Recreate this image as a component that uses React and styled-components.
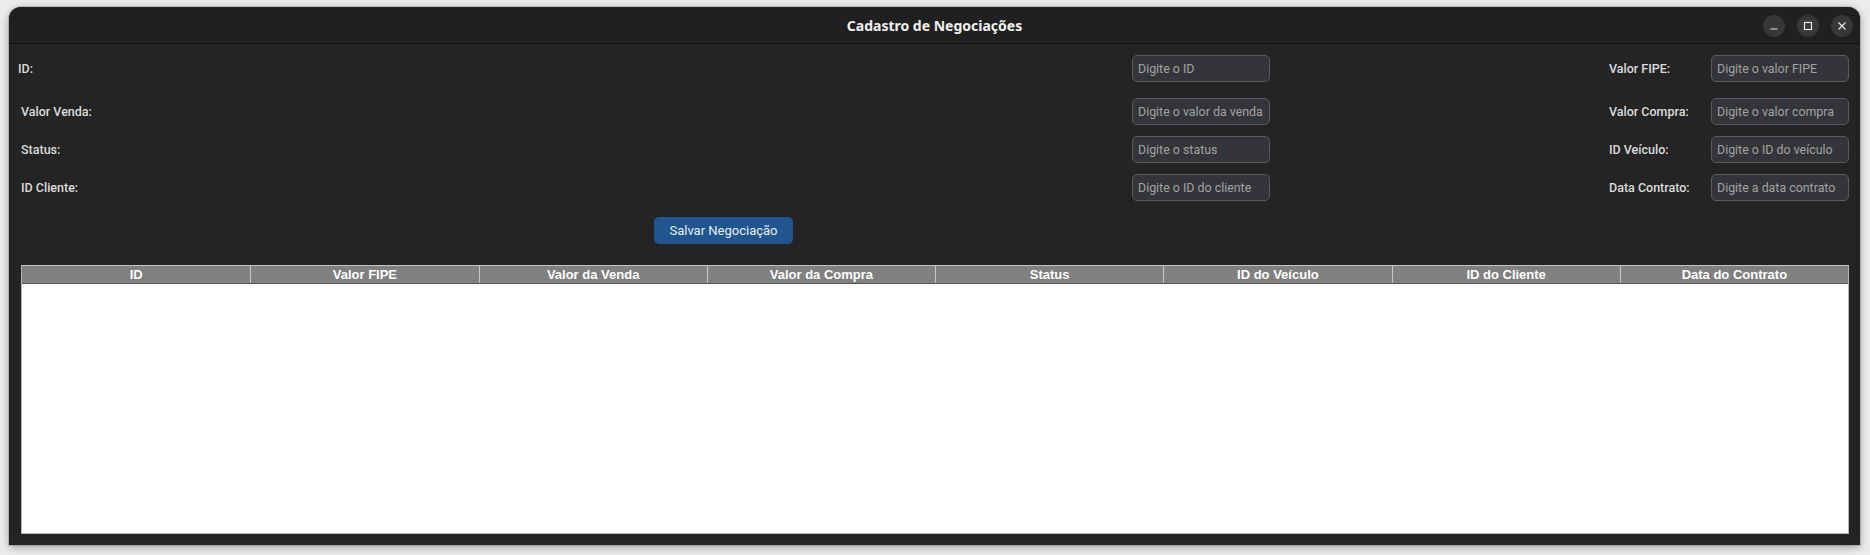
import React from 'react';
import styled, { createGlobalStyle } from 'styled-components';

const GlobalStyle = createGlobalStyle`
  html, body {
    margin: 0;
    padding: 0;
    background: #ececec;
    overflow: hidden;
  }
  body {
    font-family: Roboto, "Liberation Sans", sans-serif;
  }
`;

const fields = [
  { left: 'ID:', leftPh: 'Digite o ID', right: 'Valor FIPE:', rightPh: 'Digite o valor FIPE', space: 11, shift: true },
  { left: 'Valor Venda:', leftPh: 'Digite o valor da venda', right: 'Valor Compra:', rightPh: 'Digite o valor compra', space: 16 },
  { left: 'Status:', leftPh: 'Digite o status', right: 'ID Veículo:', rightPh: 'Digite o ID do veículo', space: 11 },
  { left: 'ID Cliente:', leftPh: 'Digite o ID do cliente', right: 'Data Contrato:', rightPh: 'Digite a data contrato', space: 11 },
];

const columns = [
  'ID',
  'Valor FIPE',
  'Valor da Venda',
  'Valor da Compra',
  'Status',
  'ID do Veículo',
  'ID do Cliente',
  'Data do Contrato',
];

function App() {
  return (
    <Screen>
      <GlobalStyle />
      <Window>
        <TitleBar>
          <span />
          <Title>Cadastro de Negociações</Title>
          <Controls>
            <CtrlButton aria-label='minimizar'>
              <svg width='10' height='10' viewBox='0 0 10 10'>
                <path d='M1.5 8h7' stroke='#e8e8e8' strokeWidth='1.2' />
              </svg>
            </CtrlButton>
            <CtrlButton aria-label='maximizar'>
              <svg width='10' height='10' viewBox='0 0 10 10'>
                <rect x='1.5' y='1.5' width='7' height='7' fill='none' stroke='#e8e8e8' strokeWidth='1.2' />
              </svg>
            </CtrlButton>
            <CtrlButton aria-label='fechar'>
              <svg width='10' height='10' viewBox='0 0 10 10'>
                <path d='M1.5 1.5l7 7M8.5 1.5l-7 7' stroke='#e8e8e8' strokeWidth='1.2' />
              </svg>
            </CtrlButton>
          </Controls>
        </TitleBar>
        <Body>
          {fields.map((f) => (
            <FormRow key={f.left} $space={f.space}>
              <Label $shift={f.shift}>{f.left}</Label>
              <Input type='text' placeholder={f.leftPh} />
              <span />
              <Label>{f.right}</Label>
              <Input type='text' placeholder={f.rightPh} />
            </FormRow>
          ))}
          <ButtonRow>
            <SaveButton>Salvar Negociação</SaveButton>
          </ButtonRow>
          <TableFrame>
            <HeaderRow>
              {columns.map((c) => (
                <HeaderCell key={c}>{c}</HeaderCell>
              ))}
            </HeaderRow>
            <TableBody />
          </TableFrame>
        </Body>
      </Window>
    </Screen>
  );
}

const Screen = styled.div`
  width: 1870px;
  height: 555px;
  box-sizing: border-box;
  padding: 7px 10px 10px 9px;
  display: flex;
`;

const Window = styled.div`
  flex: 1;
  display: flex;
  flex-direction: column;
  background: #242424;
  border-radius: 12px 12px 0 0;
  box-shadow: 0 2px 9px rgba(0, 0, 0, 0.35), 0 0 0 1px rgba(0, 0, 0, 0.12);
  overflow: hidden;
`;

const TitleBar = styled.div`
  height: 36px;
  flex: none;
  display: grid;
  grid-template-columns: 1fr auto 1fr;
  align-items: center;
  background: #202020;
  border-bottom: 1px solid #121212;
`;

const Title = styled.div`
  font-family: "Noto Sans", "Open Sans", sans-serif;
  font-weight: 700;
  font-size: 14px;
  color: #f2f2f2;
`;

const Controls = styled.div`
  justify-self: end;
  display: flex;
  gap: 12px;
  padding-right: 7px;
  padding-top: 1px;
`;

const CtrlButton = styled.button`
  width: 22px;
  height: 22px;
  border-radius: 50%;
  border: none;
  padding: 0;
  background: #373737;
  display: flex;
  align-items: center;
  justify-content: center;
`;

const Body = styled.div`
  flex: 1;
  display: flex;
  flex-direction: column;
  padding: 0 11px 11px 12px;
`;

const FormRow = styled.div`
  display: grid;
  grid-template-columns: 1fr 138px 339px 102px 138px;
  align-items: center;
  height: 27px;
  margin-top: ${(p) => p.$space}px;
`;

const Label = styled.label`
  font-family: Roboto, "Liberation Sans", sans-serif;
  font-weight: 500;
  font-size: 12.5px;
  color: #dcdcdc;
  margin-left: ${(p) => (p.$shift ? '-3px' : '0')};
`;

const Input = styled.input`
  box-sizing: border-box;
  width: 138px;
  height: 27px;
  padding: 0 0 0 5px;
  background: #333538;
  border: 1px solid #575a5e;
  border-radius: 5px;
  color: #e0e0e0;
  font-family: Roboto, "Liberation Sans", sans-serif;
  font-size: 12.4px;
  outline: none;

  &::placeholder {
    color: #a2a2a2;
  }
`;

const ButtonRow = styled.div`
  display: flex;
  margin-top: 16px;
  padding-left: 633px;
`;

const SaveButton = styled.button`
  width: 139px;
  height: 27px;
  border: none;
  border-radius: 5px;
  background: #20558f;
  color: #e6edf5;
  font-family: Roboto, "Liberation Sans", sans-serif;
  font-size: 13px;
  padding: 0;
`;

const TableFrame = styled.div`
  margin-top: 21px;
  flex: 1;
  display: flex;
  flex-direction: column;
  background: #ffffff;
  border: 1px solid #b8b8b8;
  border-top-color: #c4c4c4;
`;

const HeaderRow = styled.div`
  display: grid;
  grid-template-columns: repeat(8, 1fr);
  height: 17px;
  background: #808080;
  border-bottom: 1px solid #555555;
`;

const HeaderCell = styled.div`
  display: flex;
  align-items: center;
  justify-content: center;
  font-family: "Liberation Sans", Arial, sans-serif;
  font-weight: 700;
  font-size: 13px;
  color: #ffffff;
  border-left: 1px solid #c6c6c6;

  &:first-child {
    border-left: none;
  }
`;

const TableBody = styled.div`
  flex: 1;
  background: #ffffff;
`;

export default App;
